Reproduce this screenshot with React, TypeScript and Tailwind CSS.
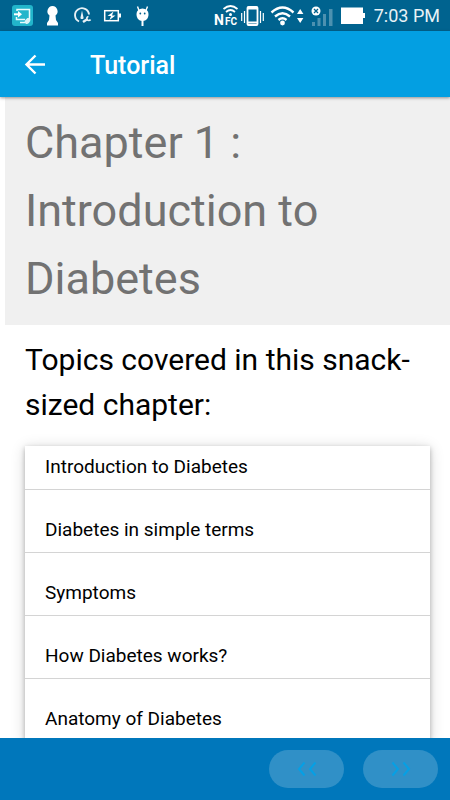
const topics = [
  "Introduction to Diabetes",
  "Diabetes in simple terms",
  "Symptoms",
  "How Diabetes works?",
  "Anatomy of Diabetes",
];

const NotificationIcons = () => (
  <svg width="155" height="31" viewBox="0 0 155 31" fill="none" aria-hidden="true">
    {/* Remote link */}
    <rect x="12" y="5" width="21" height="21" rx="3" fill="#22b5cb" />
    <path d="M17 11V9.500h12.500V19H27M16.500 17v2.500H25M20 22.500h5" stroke="#e9fbfd" strokeWidth="1.500" />
    <path d="M14 14.300h5" stroke="#fff" strokeWidth="2" />
    <path d="M18 11l4 3.300-4 3.300z" fill="#fff" />
    <ellipse cx="27.500" cy="21" rx="2.300" ry="3.200" transform="rotate(40 27.500 21)" fill="#d9f3f7" />
    {/* Keyhole */}
    <path d="M52.500 6a5.300 5.300 0 0 1 3 9.500l0.500 4.500 2 3v2.500H47V23l2-3 0.500-4.500a5.300 5.300 0 0 1 3-9.500z" fill="#fff" />
    {/* Boost */}
    <path d="M79 21.500A7 7 0 1 1 89 14.500" stroke="#e6f0f5" strokeWidth="1.900" />
    <path d="M82 10.500l1.400 6.500a1.500 1.500 0 1 1-2.800 0z" fill="#e6f0f5" />
    <path d="M83 22l4.500-3" stroke="#e6f0f5" strokeWidth="2.400" />
    <path d="M88.500 16.500a2 2 0 1 0 2 3" stroke="#e6f0f5" strokeWidth="1.700" />
    {/* Charging */}
    <rect x="104.700" y="10.700" width="13.600" height="10" stroke="#fff" strokeWidth="1.500" />
    <path d="M119 13.500h2v4h-2z" fill="#fff" />
    <path d="M113.500 11.500l-6 4.500h3.500l-1.500 4 6-4.500H112z" fill="#fff" />
    {/* Debug bridge */}
    <path d="M137.500 6.500l1.500 4M147.500 6.500l-1.500 4" stroke="#fff" strokeWidth="1.400" />
    <path d="M136.500 14a6 5.500 0 0 1 12 0c0 4-2 7-6 7s-6-3-6-7z" fill="#fff" />
    <path d="M142.500 20v6" stroke="#fff" strokeWidth="2" />
    <circle cx="140.300" cy="13.500" r="0.900" fill="#00618d" />
    <circle cx="144.700" cy="13.500" r="0.900" fill="#00618d" />
  </svg>
);

const SystemIcons = () => (
  <svg width="154" height="31" viewBox="212 0 154 31" fill="none" aria-hidden="true">
    {/* NFC */}
    <text x="214" y="25" fill="#fff" className="font-['Roboto',sans-serif] text-[14px] font-bold">N</text>
    <text x="225" y="25" fill="#fff" className="font-['Roboto',sans-serif] text-[10px] font-bold">FC</text>
    <path d="M223.500 9q7-6 14 0M226 12q4.500-4 9 0" stroke="#fff" strokeWidth="1.700" />
    <circle cx="230.500" cy="14.500" r="1.500" fill="#fff" />
    {/* Vibrate */}
    <path d="M241.700 13v8M244.500 11v12M260.500 11v12M263.300 13v8" stroke="#fff" strokeWidth="1.200" />
    <rect x="247.500" y="7" width="10" height="18" rx="1" stroke="#fff" strokeWidth="1.800" />
    <path d="M248 8.500h9M248 22.500h9" stroke="#fff" strokeWidth="2" />
    {/* Wi-Fi */}
    <path d="M271.500 12.500q11-10 22 0M275 16.500q7.500-6.500 15 0M278.500 20q4-3.500 8 0" stroke="#fff" strokeWidth="2.400" />
    <circle cx="282.500" cy="23" r="2.400" fill="#fff" />
    <path d="M297 14l3.200-5 3.200 5zM297 18l3.200 5 3.200-5z" fill="#fff" />
    {/* Signal */}
    <path d="M312 22h3v4h-3zM317.500 18h3v8h-3zM323 14h3v12h-3zM329 9h3.500v17H329z" fill="#4c91b0" />
    <circle cx="316" cy="11" r="4.500" fill="#fff" />
    <path d="M314 9l4 4M318 9l-4 4" stroke="#00618d" strokeWidth="1.300" />
    {/* Battery */}
    <path d="M341 7.500h22V13h2v5h-2v6h-22z" fill="#fff" />
  </svg>
);

const StatusBar = () => (
  <div className="flex h-[31px] shrink-0 items-center justify-between bg-[#00638f]">
    <NotificationIcons />
    <div className="flex items-center gap-2 pr-[10px]">
      <SystemIcons />
      <span className="pt-px text-lg leading-8 text-[#e8f2f6]">7:03 PM</span>
    </div>
  </div>
);

const Header = () => (
  <header className="relative z-10 flex h-[66px] shrink-0 items-center gap-[42px] bg-[#039fe2] px-[22px] pt-[2px] shadow-[0_1px_3px_rgba(0,0,0,0.4)]">
    <button type="button" aria-label="Back" className="text-white">
      <svg width="26" height="26" viewBox="0 0 26 26" fill="none" aria-hidden="true">
        <path d="M13.500 3.500L4.500 12.500l9 9M4.500 12.500H23" stroke="currentColor" strokeWidth="2.400" />
      </svg>
    </button>
    <span className="pt-px text-[25px] leading-8 font-medium text-white">Tutorial</span>
  </header>
);

const Footer = () => (
  <footer className="relative z-10 flex h-[62px] shrink-0 items-center justify-end gap-[19px] bg-[#0077bb] pr-3">
    <button
      type="button"
      aria-label="Previous"
      className="flex h-[38px] w-[75px] items-center justify-center rounded-full bg-[#3090c7] text-[#05a0e5]"
    >
      <svg width="20" height="16" viewBox="0 0 20 16" fill="none" aria-hidden="true">
        <path d="M7.500 1.500L2 8l5.500 6.500M18.500 1.500L13 8l5.500 6.500" stroke="currentColor" strokeWidth="2" />
      </svg>
    </button>
    <button
      type="button"
      aria-label="Next"
      className="flex h-[38px] w-[75px] items-center justify-center rounded-full bg-[#3090c7] text-[#05a0e5]"
    >
      <svg width="20" height="16" viewBox="0 0 20 16" fill="none" aria-hidden="true">
        <path d="M1.500 1.500L7 8l-5.500 6.500M12.500 1.500L18 8l-5.500 6.500" stroke="currentColor" strokeWidth="2" />
      </svg>
    </button>
  </footer>
);

const App = () => {
  return (
    <div className="flex h-screen flex-col overflow-hidden bg-white font-['Roboto',sans-serif]">
      <StatusBar />
      <Header />
      <main className="min-h-0 flex-1 overflow-hidden pl-[5px]">
        <h1 className="bg-[#f0f0f0] px-5 py-3 text-[45px] leading-[68px] text-[#727272]">
          Chapter 1 : Introduction to Diabetes
        </h1>
        <div className="px-5 pt-3">
          <h2 className="text-[30px] leading-[45px] text-black">
            Topics covered in this snack-sized chapter:
          </h2>
          <ul className="mt-[19px] bg-white shadow-[0_2px_5px_rgba(0,0,0,0.26),0_2px_14px_rgba(0,0,0,0.16)]">
            {topics.map((topic) => (
              <li
                key={topic}
                className="flex h-[63px] items-end border-b border-[#d4d4d4] px-5 pb-2 text-[19px] leading-7 text-black first:h-[44px]"
              >
                {topic}
              </li>
            ))}
          </ul>
        </div>
      </main>
      <Footer />
    </div>
  );
};

export default App;
